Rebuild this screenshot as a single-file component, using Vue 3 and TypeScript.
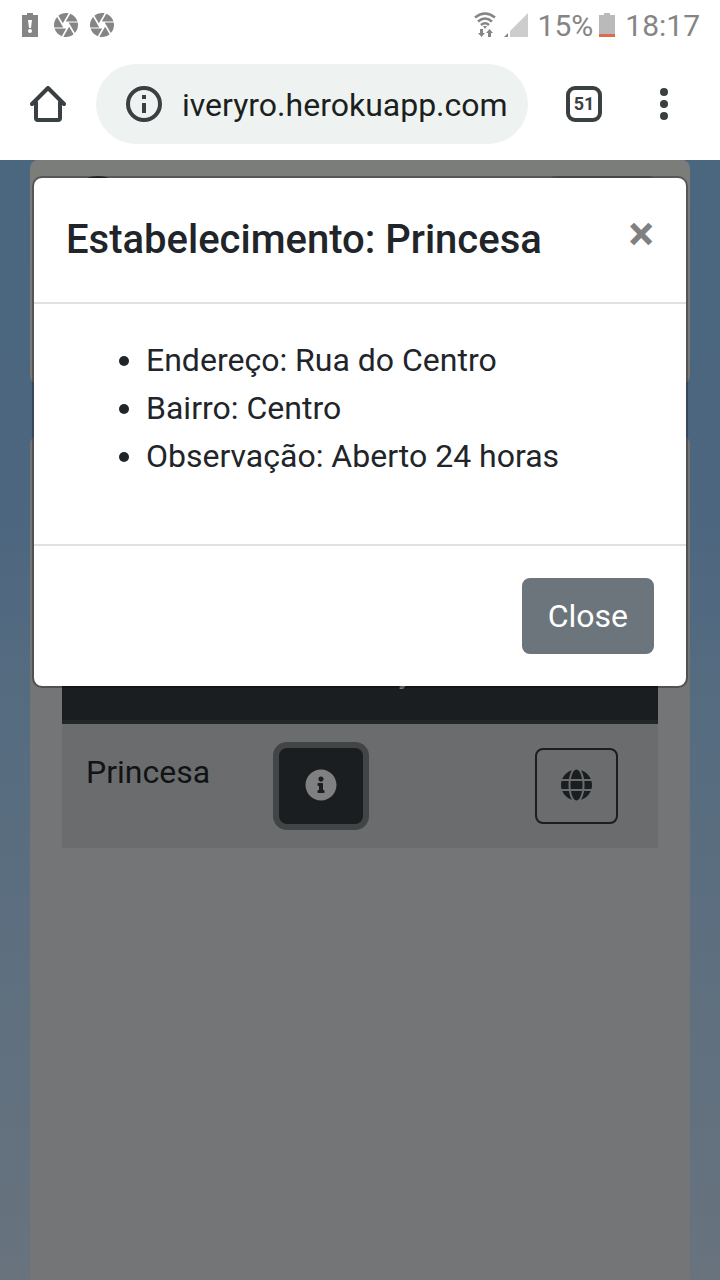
<script setup lang="ts">
import { ref } from 'vue'

interface Detail {
  label: string
  value: string
}

interface Establishment {
  name: string
  details: Detail[]
}

const establishments: Establishment[] = [
  {
    name: 'Princesa',
    details: [
      { label: 'Endereço', value: 'Rua do Centro' },
      { label: 'Bairro', value: 'Centro' },
      { label: 'Observação', value: 'Aberto 24 horas' },
    ],
  },
]

const selected = ref<Establishment | null>(establishments[0])

const shutter =
  'M9.4 10.5l4.77-8.26C13.47 2.09 12.75 2 12 2c-2.4 0-4.6.85-6.32 2.25l3.66 6.35.06-.1zM21.54 9c-.92-2.92-3.15-5.26-6-6.34L11.88 9h9.66zm.26 1h-7.49l.29.5 4.76 8.25C21 16.97 22 14.61 22 12c0-.69-.07-1.35-.2-2zM8.54 12l-3.9-6.75C3.01 7.03 2 9.39 2 12c0 .69.07 1.35.2 2h7.49l-1.15-2zm-6.08 3c.92 2.92 3.15 5.26 6 6.34L12.12 15H2.46zm11.27 0l-3.9 6.76c.7.15 1.42.24 2.17.24 2.4 0 4.6-.85 6.32-2.25l-3.66-6.35-.93 1.6z'
</script>

<template>
  <div class="screen">
    <div class="status">
      <div class="status-left">
        <svg width="16" height="24" viewBox="0 0 16 24" aria-hidden="true">
          <path fill="#858585" d="M5 0h6v2h5v22H0V2h5z" />
          <path fill="#fff" d="M6 7h4l-1 8H7z" />
          <circle cx="8" cy="18" r="2" fill="#fff" />
        </svg>
        <svg v-for="n in 2" :key="n" width="24" height="24" viewBox="2 2 20 20" aria-hidden="true">
          <path fill="#858585" :d="shutter" />
        </svg>
      </div>
      <div class="status-right">
        <svg class="wifi" width="22" height="26" viewBox="0 0 22 26" aria-hidden="true">
          <g fill="none" stroke="#858585" stroke-width="2.5">
            <path d="M1 5.5Q11-2.5 21 5.5" />
            <path d="M4 9.5Q11 3.5 18 9.5" />
            <path d="M7 13Q11 9.500 15 13" />
          </g>
          <path fill="#858585" d="M9 14h4l-2 3zM6 17h3v4h2l-3.500 4L4 21h2zM14 25h3v-4h2l-3.500-4L12 21h2z" />
        </svg>
        <svg class="signal" width="24" height="24" viewBox="0 0 24 24" aria-hidden="true">
          <path fill="#cdcdcd" d="M24 0v24H6V18z" />
          <path fill="#858585" d="M4 20v4H0z" />
        </svg>
        <span class="percent">15%</span>
        <svg class="battery" width="16" height="24" viewBox="0 0 16 24" aria-hidden="true">
          <path fill="#bababa" d="M5 0h6v2h5v19H0V2h5z" />
          <path fill="#d96e4c" d="M0 21h16v3H0z" />
        </svg>
        <span>18:17</span>
      </div>
    </div>

    <header class="toolbar">
      <button class="tool home" type="button" aria-label="Home">
        <svg width="36" height="36" viewBox="0 0 36 36" aria-hidden="true">
          <path fill="none" stroke="#3a4042" stroke-width="4" stroke-linejoin="round" stroke-linecap="round" d="M2 18L18 2l16 16M6 16v16q0 2 2 2h20q2 0 2-2V16" />
        </svg>
      </button>
      <div class="omnibox">
        <svg width="36" height="36" viewBox="0 0 36 36" aria-hidden="true">
          <circle cx="18" cy="18" r="16" fill="none" stroke="#3a4042" stroke-width="4" />
          <path fill="#3a4042" d="M16 9h4v4h-4zM16 17h4v10h-4z" />
        </svg>
        <input class="url" type="text" aria-label="URL" value="iveryro.herokuapp.com" readonly />
      </div>
      <button class="tabs" type="button" aria-label="51 tabs">51</button>
      <button class="tool menu" type="button" aria-label="Menu">
        <svg width="8" height="32" viewBox="0 0 8 32" aria-hidden="true">
          <g fill="#3a4042">
            <circle cx="4" cy="4" r="4" />
            <circle cx="4" cy="16" r="4" />
            <circle cx="4" cy="28" r="4" />
          </g>
        </svg>
      </button>
    </header>

    <main class="page">
      <section class="card brand">
        <svg width="60" height="60" viewBox="0 0 60 60" aria-hidden="true">
          <circle cx="30" cy="30" r="30" fill="#303233" />
        </svg>
        <div class="toggler"></div>
      </section>
      <section class="card list">
        <table>
          <colgroup>
            <col class="col-name" />
            <col class="col-info" />
            <col />
          </colgroup>
          <thead>
            <tr>
              <th scope="col">Nome</th>
              <th scope="col">Informações</th>
              <th scope="col">Site</th>
            </tr>
          </thead>
          <tbody>
            <tr v-for="item in establishments" :key="item.name">
              <td>{{ item.name }}</td>
              <td>
                <button class="btn btn-dark" type="button" aria-label="Informações" @click="selected = item">
                  <svg width="32" height="32" viewBox="0 0 512 512" aria-hidden="true">
                    <path fill="currentColor" d="M256 8C119.043 8 8 119.083 8 256c0 136.997 111.043 248 248 248s248-111.003 248-248C504 119.083 392.957 8 256 8zm0 110c23.196 0 42 18.804 42 42s-18.804 42-42 42-42-18.804-42-42 18.804-42 42-42zm56 254c0 6.627-5.373 12-12 12h-88c-6.627 0-12-5.373-12-12v-24c0-6.627 5.373-12 12-12h12v-64h-12c-6.627 0-12-5.373-12-12v-24c0-6.627 5.373-12 12-12h64c6.627 0 12 5.373 12 12v100h12c6.627 0 12 5.373 12 12v24z" />
                  </svg>
                </button>
              </td>
              <td>
                <button class="btn btn-outline" type="button" aria-label="Site">
                  <svg width="31" height="32" viewBox="0 0 496 512" aria-hidden="true">
                    <path fill="currentColor" d="M336.5 160C322 70.7 287.8 8 248 8s-74 62.7-88.5 152h177zM152 256c0 22.2 1.2 43.5 3.3 64h185.3c2.1-20.5 3.3-41.8 3.3-64s-1.2-43.5-3.3-64H155.3c-2.1 20.5-3.3 41.8-3.3 64zm324.7-96c-28.6-67.9-86.5-120.4-158-141.6 24.4 33.8 41.2 84.7 50 141.6h108zM177.2 18.4C105.8 39.6 47.8 92.1 19.3 160h108c8.7-56.9 25.5-107.8 49.9-141.6zM487.4 192H372.7c2.1 21 3.3 42.5 3.3 64s-1.2 43-3.3 64h114.6c5.5-20.5 8.6-41.8 8.6-64s-3.1-43.5-8.5-64zM120 256c0-21.5 1.2-43 3.3-64H8.6C3.2 212.5 0 233.8 0 256s3.2 43.5 8.6 64h114.6c-2-21-3.2-42.5-3.2-64zm39.5 96c14.5 89.3 48.7 152 88.5 152s74-62.7 88.5-152h-177zm159.3 141.6c71.4-21.2 129.4-73.7 158-141.6h-108c-8.8 56.9-25.6 107.8-50 141.6zM19.3 352c28.6 67.9 86.5 120.4 158 141.6-24.4-33.8-41.2-84.7-50-141.6h-108z" />
                  </svg>
                </button>
              </td>
            </tr>
          </tbody>
        </table>
      </section>

      <div v-if="selected" class="modal" role="dialog" aria-modal="true" aria-labelledby="modal-title">
        <div class="modal-header">
          <h5 id="modal-title">Estabelecimento: {{ selected.name }}</h5>
          <button class="close" type="button" aria-label="Close" @click="selected = null">×</button>
        </div>
        <div class="modal-body">
          <ul>
            <li v-for="d in selected.details" :key="d.label">{{ d.label }}: {{ d.value }}</li>
          </ul>
        </div>
        <div class="modal-footer">
          <button class="btn btn-secondary" type="button" @click="selected = null">Close</button>
        </div>
      </div>
    </main>
  </div>
</template>

<style>
body {
  margin: 0;
}
</style>

<style scoped>
.screen {
  display: flex;
  flex-direction: column;
  min-height: 100vh;
  background: #fff;
  color: #212529;
  font: 32px/48px Roboto, "Liberation Sans", sans-serif;
}
.screen * {
  box-sizing: border-box;
}
svg {
  display: block;
  flex: none;
}
button,
input {
  font: inherit;
}
.status {
  display: flex;
  justify-content: space-between;
  align-items: center;
  height: 50px;
  padding: 0 20px 0 22px;
  color: #858585;
  font-size: 30px;
}
.status-left,
.status-right {
  display: flex;
  align-items: center;
}
.status-left {
  gap: 12px;
}
.status-left svg:first-child {
  margin-right: 4px;
}
.status-right span {
  padding-top: 2px;
}
.signal {
  margin: 0 10px 0 8px;
}
.battery {
  margin: 0 10px 0 6px;
}
.toolbar {
  display: flex;
  align-items: center;
  height: 110px;
  padding: 0 52px 2px 30px;
}
.toolbar button {
  flex: none;
  padding: 0;
  background: none;
}
.tool {
  border: 0;
}
.omnibox {
  display: flex;
  flex: 1;
  align-items: center;
  gap: 20px;
  min-width: 0;
  height: 80px;
  margin: 0 38px 0 30px;
  padding: 0 16px 0 30px;
  border-radius: 40px;
  background: #eef2f1;
}
.url {
  flex: 1;
  min-width: 0;
  padding: 2px 0 0;
  border: 0;
  background: none;
  color: #1c1f20;
  outline: 0;
}
.toolbar .tabs {
  width: 36px;
  height: 36px;
  border: 4px solid #3a4042;
  border-radius: 9px;
  color: #3a4042;
  font-size: 18px;
  font-weight: 700;
  line-height: 28px;
}
.menu {
  margin-left: 58px;
}
.page {
  position: relative;
  display: flex;
  flex: 1;
  flex-direction: column;
  gap: 52px;
  padding: 0 30px;
  background: linear-gradient(#4b667f, #4c6680 30%, #566c80 50%, #68737e);
}
.card {
  border-radius: 8px;
  background: #747577;
}
.brand {
  display: flex;
  justify-content: space-between;
  height: 224px;
  padding: 16px 34px 0 38px;
  background: linear-gradient(#7b7d7b, #787a78);
}
.toggler {
  width: 108px;
  height: 80px;
  border: 2px solid #656766;
  border-radius: 8px;
}
.list {
  flex: 1;
  padding: 188px 32px 32px;
  border-radius: 8px 8px 0 0;
}
table {
  width: 100%;
  table-layout: fixed;
  border-spacing: 0;
}
.col-name {
  width: 193px;
}
.col-info {
  width: 256px;
}
th,
td {
  padding: 24px;
  text-align: left;
  vertical-align: top;
}
th {
  border-bottom: 4px solid #22272a;
  background: #1a1e20;
  color: #808080;
}
td {
  background: #6b6c6e;
  color: #111314;
}
td .btn {
  display: block;
}
.btn {
  padding: 12px 24px;
  border: 2px solid;
  border-radius: 8px;
}
td .btn svg {
  margin: 7px 0 9px;
}
.btn-dark {
  border-color: #1a1e20;
  background: #1a1e20;
  color: #808080;
  box-shadow: 0 0 0 6px #424546;
}
.btn-outline {
  border-color: #1a1e20;
  background: none;
  color: #1a1e20;
}
.btn-secondary {
  border-color: #6b757b;
  background: #6b757b;
  color: #fff;
}
.modal {
  position: absolute;
  top: 16px;
  right: 32px;
  left: 32px;
  border: 2px solid rgba(0, 0, 0, 0.3);
  border-radius: 10px;
  background: #fff;
  background-clip: padding-box;
}
.modal-header {
  display: flex;
  justify-content: space-between;
  align-items: flex-start;
  padding: 32px;
  border-bottom: 2px solid #dee2e4;
}
h5 {
  margin: 0;
  font-size: 40px;
  font-weight: 500;
  line-height: 60px;
}
.close {
  padding: 0;
  border: 0;
  background: none;
  color: #808080;
  font-size: 48px;
  font-weight: 700;
  line-height: 48px;
}
.modal-body {
  padding: 32px;
}
ul {
  margin: 0 0 32px;
  padding-left: 80px;
}
.modal-footer {
  display: flex;
  justify-content: flex-end;
  padding: 32px;
  border-top: 2px solid #dee2e4;
}
</style>
